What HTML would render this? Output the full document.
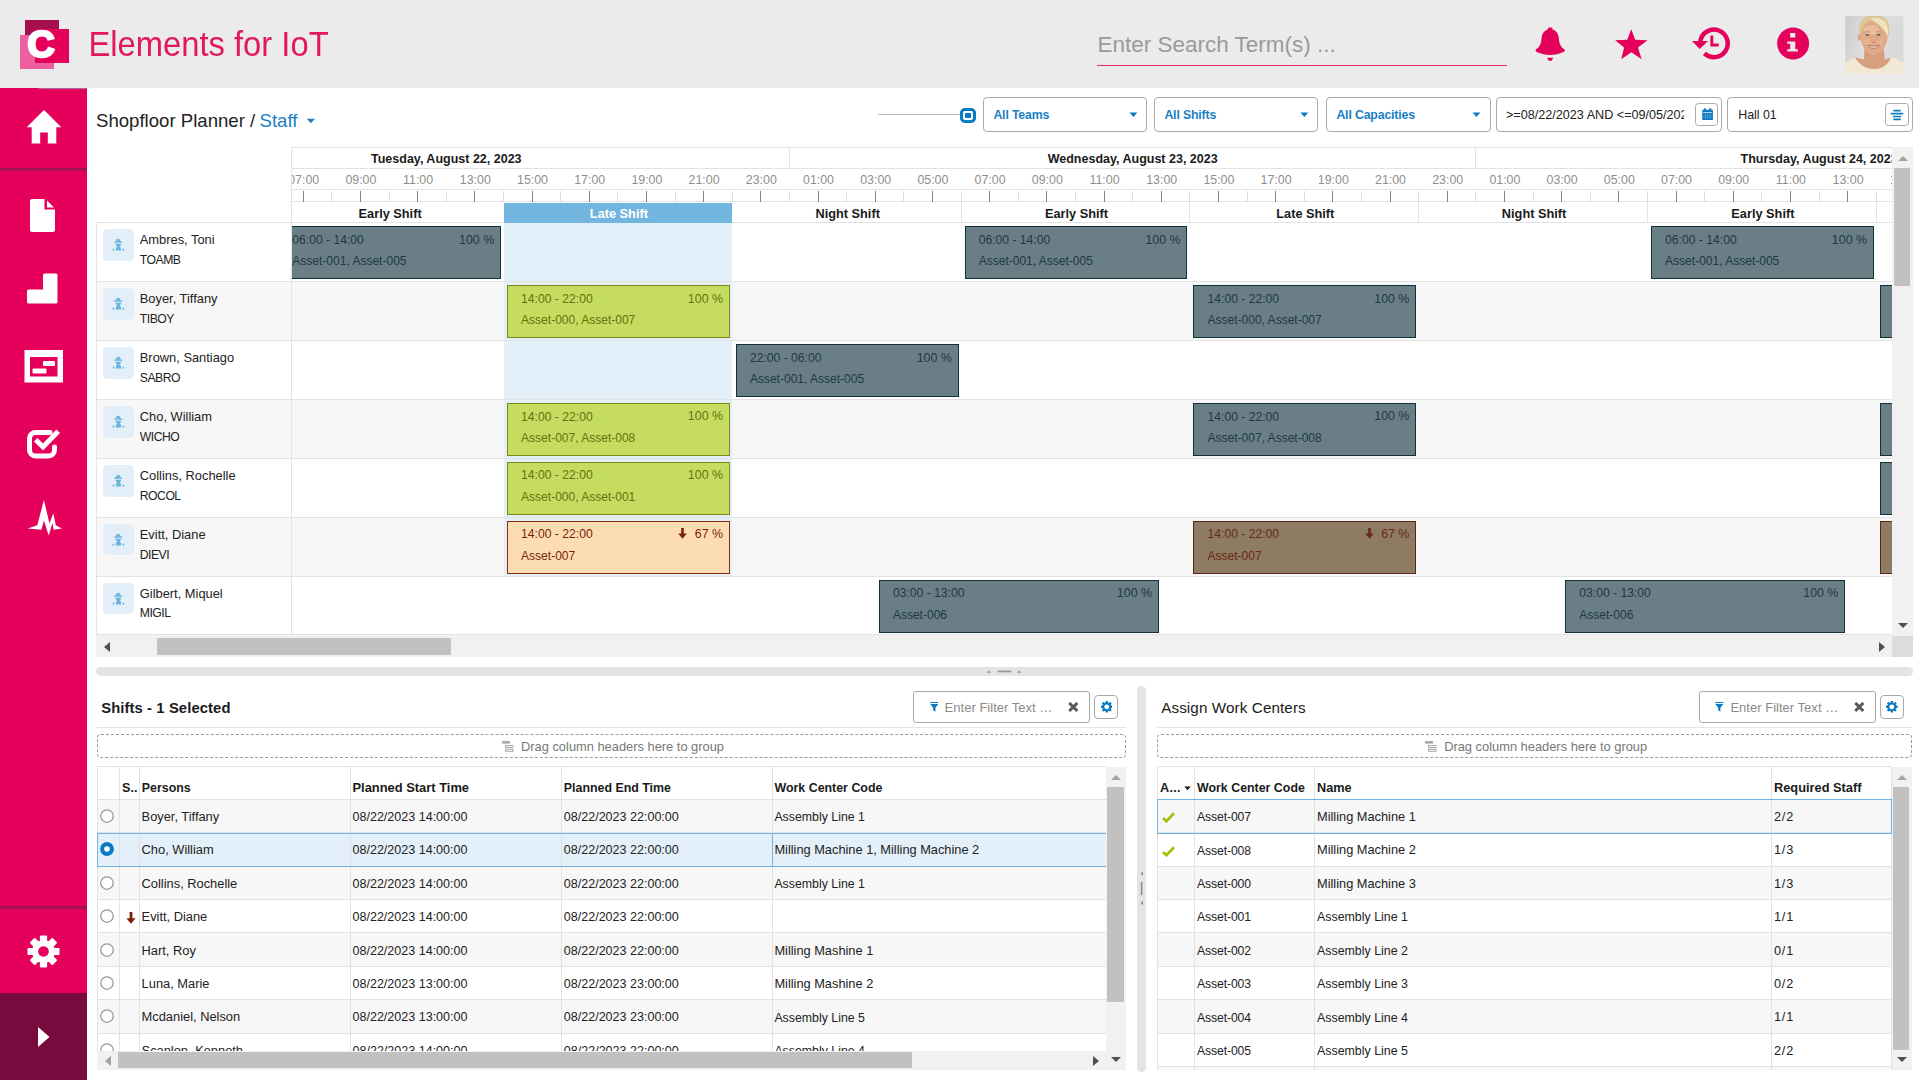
<!DOCTYPE html>
<html lang="en"><head><meta charset="utf-8"><title>Elements for IoT - Shopfloor Planner</title>
<style>
html,body{margin:0;padding:0;background:#fff;}
body{width:1919px;height:1080px;position:relative;overflow:hidden;font-family:"Liberation Sans",sans-serif;font-size:12.7px;color:#222;}
div,svg{position:absolute;box-sizing:border-box;}
.t{white-space:pre;}
.clip{overflow:hidden;}
</style></head><body>

<div style="left:0.00px;top:0.00px;width:1919.00px;height:88.00px;background:#ebebeb;"></div>
<div style="left:25.00px;top:20.00px;width:34.00px;height:34.00px;background:#a60f4e;"></div>
<div style="left:20.00px;top:35.00px;width:34.00px;height:34.00px;background:#ee5fa0;"></div>
<div style="left:35.00px;top:29.00px;width:34.00px;height:34.00px;background:#e5005b;"></div>
<div class="t" style="top:21.51px;font-size:37.5px;line-height:44px;color:#fff;font-weight:bold;left:27.60px;-webkit-text-stroke:2.400px #fff;">C</div>
<div class="t" style="top:24.65px;font-size:32.76px;line-height:40px;color:#e3175e;left:88.40px;transform:scaleY(1.06);transform-origin:0 31.35px;">Elements for IoT</div>
<div class="t" style="top:29.90px;font-size:22.5px;line-height:30px;color:#9a9a9a;left:1097.40px;">Enter Search Term(s) ...</div>
<div style="left:1096.50px;top:64.50px;width:410.50px;height:1.50px;background:#e8286f;"></div>
<svg style="left:1535px;top:26px;width:31px;height:36px" viewBox="0 0 31 36"><path fill="#e5005b" d="M12.900 2.400 a1 1 0 0 1 1 -1 h2.600 a1 1 0 0 1 1 1 v1 C22 4.500 23.600 9 23.800 12 C24.200 17.500 25.500 20.500 29.300 23.300 C30.200 24.100 30 25.300 29 25.800 C24 28 19.500 29 15.200 29 C10.900 29 6.400 28 1.400 25.800 C0.400 25.300 0.200 24.100 1.100 23.300 C4.900 20.500 6.200 17.500 6.600 12 C6.800 9 8.400 4.500 12.900 3.400Z M12.300 31.700 H18.100 C17.600 33.700 16.600 35 15.200 35 C13.800 35 12.800 33.700 12.300 31.700Z"/></svg>
<svg style="left:1614px;top:28px;width:35px;height:33px" viewBox="0 0 35 33"><path fill="#e5005b" d="M17.200 1.200 L21.200 11.800 L33.600 12.200 L24 19.500 L27.600 31.200 L17.400 24.200 L7.200 31.200 L10.100 19.500 L1.100 12.200 L13.200 11.800Z"/></svg>
<svg style="left:1691px;top:26px;width:40px;height:35px" viewBox="0 0 40 35"><g fill="none" stroke="#e5005b"><path stroke-width="4.500" d="M9.300 15.300 A13.800 13.800 0 1 1 13.400 27.400"/><path d="M20.800 9.400 V19 H27.700" stroke-width="2.900"/></g><path fill="#e5005b" d="M1 15.100 H17.100 L8.700 23Z"/></svg>
<svg style="left:1777px;top:27px;width:33px;height:33px" viewBox="0 0 33 33"><circle cx="16.100" cy="16.500" r="16" fill="#e5005b"/><path fill="#ebebeb" d="M13.200 5.900 H18.300 V10.600 H13.200Z M10.300 14.600 H18.300 V22.300 H20.900 V24.500 H10.300 V22.300 H13.200 V16.800 H10.300Z"/></svg>
<svg style="left:1845px;top:15.500px;width:58.800px;height:58.600px" viewBox="0 0 59 59">
<defs><linearGradient id="avbg" x1="0" x2="1" y1="0" y2="0.300"><stop offset="0" stop-color="#cbcbcb"/><stop offset="0.450" stop-color="#dfdfdf"/><stop offset="1" stop-color="#d9d9d9"/></linearGradient>
<filter id="avbl" x="-10%" y="-10%" width="120%" height="120%"><feGaussianBlur stdDeviation="0.550"/></filter>
<clipPath id="avc"><rect width="59" height="59"/></clipPath></defs>
<g clip-path="url(#avc)"><rect width="59" height="59" fill="url(#avbg)"/>
<g filter="url(#avbl)">
<path d="M19.500 33 H39 L40 43.500 L48 41.500 V57 H9 V41.500 L19 43.500Z" fill="#d6a07f"/>
<path d="M-2 48 L10 41.600 C13 47.500 19 53.400 29.500 53.400 C39.500 53.400 44 47.500 46.500 41.400 L61 47.500 V61 H-2Z" fill="#f2e8d6"/>
<ellipse cx="14.300" cy="21.500" rx="1.600" ry="3.200" fill="#d9a182"/>
<path d="M15 19 C14 8 20 3 29 3 C38 3 43.500 9 43 20 C42.500 30 36 39.500 29 39.500 C22 39.500 15.800 30 15 19Z" fill="#e0aa88"/>
<ellipse cx="26.500" cy="14" rx="8" ry="5" fill="#f0c4a4" opacity="0.700"/><ellipse cx="22" cy="26" rx="3.500" ry="3" fill="#ecb898" opacity="0.600"/><ellipse cx="35.500" cy="26" rx="3" ry="3" fill="#ecb898" opacity="0.500"/>
<path d="M14.800 18 C12.500 8 17 0.500 26 -1 C36 -2.500 42.500 1.500 44 9 C45 14 44.800 18.500 43 21 C41 15.500 36 9.500 26 4.500 C21 6 17.500 11 16.200 17.500Z" fill="#dcc693"/>
<path d="M25 2.500 C31 1 38 2 41.500 8 C43.500 12 43.800 17 43 20.500 C40 14 34.500 8 25 2.500Z" fill="#efe2bd"/>
<path d="M23.300 29.800 Q28.700 33.800 34.200 29.800 Q28.700 31.300 23.300 29.800Z" fill="#fff"/>
<path d="M22.800 29.500 Q28.700 31.500 34.700 29.500" stroke="#b06a58" stroke-width="0.900" fill="none"/>
<path d="M23.500 30.500 Q28.700 35.300 34 30.500" stroke="#c08270" stroke-width="0.900" fill="none"/>
<ellipse cx="22.600" cy="18.900" rx="2" ry="0.900" fill="#6b5a55"/><ellipse cx="33.600" cy="18.900" rx="2" ry="0.900" fill="#6b5a55"/>
<path d="M19.800 16.300 Q22.500 15 25.300 16.200 M31 16.200 Q33.800 15 36.500 16.300" stroke="#b08a68" stroke-width="0.800" fill="none"/>
<path d="M27 26 Q28.700 27.200 30.500 26" stroke="#b57f66" stroke-width="1" fill="none"/>
</g></g></svg>
<div style="left:0.00px;top:88.00px;width:87.30px;height:905.00px;background:#e5005b;"></div>
<div style="left:39.00px;top:88.00px;width:48.30px;height:0.80px;background:#b065a5;"></div>
<div style="left:0.00px;top:168.00px;width:87.30px;height:3.00px;background:#a5124f;"></div>
<div style="left:0.00px;top:906.00px;width:87.30px;height:3.00px;background:#a5124f;"></div>
<div style="left:0.00px;top:993.00px;width:87.30px;height:87.00px;background:#780b3d;"></div>
<svg style="left:25px;top:109px;width:38px;height:36px" viewBox="0 0 38 36"><path fill="#fff" d="M19 1 L36.300 18.300 H31.300 V34.500 H22.800 V23.500 H15.200 V34.500 H6.700 V18.300 H1.700Z"/></svg>
<svg style="left:30px;top:198px;width:26px;height:35px" viewBox="0 0 26 35"><path fill="#fff" d="M2 1 H14.500 V11.500 H25 V32 a2 2 0 0 1 -2 2 H2 a2 2 0 0 1 -2 -2 V3 a2 2 0 0 1 2 -2Z M17 2.500 L24 9.500 H17Z"/></svg>
<svg style="left:26px;top:272px;width:32px;height:33px" viewBox="0 0 32 33"><path fill="#fff" d="M18.500 1.500 H30 a1.500 1.500 0 0 1 1.500 1.500 V30 a1.500 1.500 0 0 1 -1.500 1.500 H2.500 a1.500 1.500 0 0 1 -1.500 -1.500 V19 a1.500 1.500 0 0 1 1.500 -1.500 H17 V3 a1.500 1.500 0 0 1 1.500 -1.500Z"/></svg>
<svg style="left:24px;top:349px;width:40px;height:34px" viewBox="0 0 40 34"><path fill="#fff" fill-rule="evenodd" d="M0.500 1 H39 V33.500 H0.500Z M6 8 V27.500 H33.500 V8Z"/><rect x="19" y="12" width="12" height="5" rx="1" fill="#fff"/><rect x="8.500" y="19.500" width="14" height="5" rx="1" fill="#fff"/></svg>
<svg style="left:26px;top:427px;width:36px;height:34px" viewBox="0 0 36 34"><path fill="none" stroke="#fff" stroke-width="5" stroke-linecap="round" stroke-linejoin="round" d="M24 5.500 H9.500 a6 6 0 0 0 -6 6 V23 a6 6 0 0 0 6 6 H22.500 a6 6 0 0 0 6 -6 V20"/><path fill="none" stroke="#fff" stroke-width="5" stroke-linecap="square" stroke-linejoin="miter" d="M11.500 14.500 L17 20 L30.500 6"/></svg>
<svg style="left:27px;top:499px;width:36px;height:38px" viewBox="27 499 36 38"><path fill="#fff" d="M27.600 528.400 L37.300 525.200 L43.900 500 L49.500 523.500 L53.300 513.200 L55.800 525.200 L62 528.400 L53.600 529.700 L52.400 523 L48.700 535.600 L43.900 520.500 L41.400 529.800Z"/></svg>
<svg style="left:27px;top:935px;width:33px;height:33px" viewBox="-16.500 -16.500 33 33"><g fill="#fff"><path fill-rule="evenodd" d="M0 -11.500 a11.500 11.500 0 1 0 0.010 0Z M0 -5.300 a5.300 5.300 0 1 1 -0.010 0Z"/><rect x="-3.600" y="-16" width="7.200" height="7" rx="1" transform="rotate(0)"/><rect x="-3.600" y="-16" width="7.200" height="7" rx="1" transform="rotate(45)"/><rect x="-3.600" y="-16" width="7.200" height="7" rx="1" transform="rotate(90)"/><rect x="-3.600" y="-16" width="7.200" height="7" rx="1" transform="rotate(135)"/><rect x="-3.600" y="-16" width="7.200" height="7" rx="1" transform="rotate(180)"/><rect x="-3.600" y="-16" width="7.200" height="7" rx="1" transform="rotate(225)"/><rect x="-3.600" y="-16" width="7.200" height="7" rx="1" transform="rotate(270)"/><rect x="-3.600" y="-16" width="7.200" height="7" rx="1" transform="rotate(315)"/></g></svg>
<svg style="left:37px;top:1026px;width:14px;height:22px" viewBox="0 0 14 22"><path fill="#fff" d="M1 1 L12.500 11 L1 21Z"/></svg>
<div class="t" style="top:108.06px;font-size:18.6px;line-height:26px;color:#222;left:96.00px;">Shopfloor Planner / </div>
<div class="t" style="top:108.06px;font-size:18.6px;line-height:26px;color:#1a7fc4;left:259.50px;">Staff</div>
<svg style="left:306px;top:118px;width:10px;height:6px" viewBox="0 0 10 6"><path fill="#1a7fc4" d="M0.800 0.800 H9 L4.900 5.200Z"/></svg>
<div style="left:877.60px;top:113.60px;width:83.00px;height:1.50px;background:#b9b9b9;"></div>
<div style="left:960.00px;top:107.70px;width:15.70px;height:15.60px;border:3.100px solid #0a7ac2;border-radius:4.800px;background:#fff;"></div>
<div style="left:964.90px;top:112.60px;width:5.90px;height:5.80px;background:#0a7ac2;border-radius:0.500px;"></div>
<div style="left:982.60px;top:97.30px;width:164.60px;height:34.60px;border:1px solid #a9a9a9;border-radius:4px;background:#fff;"></div>
<div class="t" style="top:104.94px;font-size:12.3px;line-height:20px;color:#1a7fc4;font-weight:bold;letter-spacing:-0.15px;left:993.40px;">All Teams</div>
<svg style="left:1128.5px;top:112.3px;width:9px;height:6px" viewBox="0 0 9 6"><path fill="#0a7ac2" d="M0.500 0.500 H8.300 L4.400 4.900Z"/></svg>
<div style="left:1154.00px;top:97.30px;width:164.40px;height:34.60px;border:1px solid #a9a9a9;border-radius:4px;background:#fff;"></div>
<div class="t" style="top:104.94px;font-size:12.3px;line-height:20px;color:#1a7fc4;font-weight:bold;letter-spacing:-0.15px;left:1164.40px;">All Shifts</div>
<svg style="left:1299.8px;top:112.3px;width:9px;height:6px" viewBox="0 0 9 6"><path fill="#0a7ac2" d="M0.500 0.500 H8.300 L4.400 4.900Z"/></svg>
<div style="left:1326.00px;top:97.30px;width:164.80px;height:34.60px;border:1px solid #a9a9a9;border-radius:4px;background:#fff;"></div>
<div class="t" style="top:104.94px;font-size:12.3px;line-height:20px;color:#1a7fc4;font-weight:bold;letter-spacing:-0.15px;left:1336.40px;">All Capacities</div>
<svg style="left:1471.6px;top:112.3px;width:9px;height:6px" viewBox="0 0 9 6"><path fill="#0a7ac2" d="M0.500 0.500 H8.300 L4.400 4.900Z"/></svg>
<div style="left:1495.60px;top:97.30px;width:226.60px;height:34.60px;border:1px solid #a9a9a9;border-radius:4px;background:#fff;"></div>
<div style="left:1506.00px;top:104.00px;width:177.50px;height:22.00px;overflow:hidden;"><div class="t" style="left:0;top:0;line-height:22px;font-size:12.62px;color:#222;letter-spacing:0px">&gt;=08/22/2023 AND &lt;=09/05/2023</div></div>
<div style="left:1695.20px;top:103.00px;width:23.00px;height:23.00px;border:1px solid #a9a9a9;border-radius:3.500px;background:#fff;"></div>
<svg style="left:1701.600px;top:108.200px;width:11.200px;height:12.400px" viewBox="0 0 14 15"><g fill="#0a7ac2"><rect x="0.300" y="2" width="13.400" height="12.800" rx="1"/><rect x="2.400" y="0.200" width="2.400" height="3.200" rx="0.600"/><rect x="9.200" y="0.200" width="2.400" height="3.200" rx="0.600"/></g><g fill="#fff"><rect x="1.400" y="5" width="11.200" height="0.900" opacity="0.900"/><rect x="4.20" y="5.500" width="0.450" height="8.300" opacity="0.450"/><rect x="7.00" y="5.500" width="0.450" height="8.300" opacity="0.450"/><rect x="9.80" y="5.500" width="0.450" height="8.300" opacity="0.450"/><rect x="1.400" y="8.50" width="11.200" height="0.450" opacity="0.450"/><rect x="1.400" y="11.10" width="11.200" height="0.450" opacity="0.450"/></g></svg>
<div style="left:1727.30px;top:97.30px;width:186.00px;height:34.60px;border:1px solid #a9a9a9;border-radius:4px;background:#fff;"></div>
<div class="t" style="top:105.30px;font-size:12.4px;line-height:20px;color:#222;left:1738.20px;">Hall 01</div>
<div style="left:1885.30px;top:103.00px;width:23.30px;height:23.00px;border:1px solid #a9a9a9;border-radius:3.500px;background:#fff;"></div>
<svg style="left:1890px;top:109px;width:14px;height:12px" viewBox="0 0 14 12"><g fill="#0a7ac2"><rect x="3.250" y="0.750" width="7.500" height="1.700" rx="0.400"/><rect x="0.850" y="3.850" width="12.300" height="1.700" rx="0.400"/><rect x="2.750" y="6.650" width="8.500" height="1.700" rx="0.400"/><rect x="3.250" y="9.450" width="7.500" height="1.700" rx="0.400"/></g></svg>
<div style="left:96.50px;top:281.42px;width:1795.50px;height:58.92px;background:#f7f7f7;"></div>
<div style="left:96.50px;top:399.26px;width:1795.50px;height:58.92px;background:#f7f7f7;"></div>
<div style="left:96.50px;top:517.10px;width:1795.50px;height:58.92px;background:#f7f7f7;"></div>
<div style="left:504.00px;top:223.00px;width:228.30px;height:58.42px;background:#e4f0f9;"></div>
<div style="left:504.00px;top:281.92px;width:228.30px;height:58.42px;background:#e4f0f9;"></div>
<div style="left:504.00px;top:340.84px;width:228.30px;height:58.42px;background:#e4f0f9;"></div>
<div style="left:504.00px;top:399.76px;width:228.30px;height:58.42px;background:#e4f0f9;"></div>
<div style="left:504.00px;top:458.68px;width:228.30px;height:58.42px;background:#e4f0f9;"></div>
<div style="left:504.00px;top:517.60px;width:228.30px;height:58.42px;background:#e4f0f9;"></div>
<div style="left:503.50px;top:634.00px;width:228.80px;height:1.00px;background:#e4f0f9;"></div>
<div style="left:96.50px;top:222.00px;width:1795.50px;height:1.00px;background:#e3e3e3;"></div>
<div style="left:96.50px;top:280.92px;width:1795.50px;height:1.00px;background:#e3e3e3;"></div>
<div style="left:96.50px;top:339.84px;width:1795.50px;height:1.00px;background:#e3e3e3;"></div>
<div style="left:96.50px;top:398.76px;width:1795.50px;height:1.00px;background:#e3e3e3;"></div>
<div style="left:96.50px;top:457.68px;width:1795.50px;height:1.00px;background:#e3e3e3;"></div>
<div style="left:96.50px;top:516.60px;width:1795.50px;height:1.00px;background:#e3e3e3;"></div>
<div style="left:96.50px;top:575.52px;width:1795.50px;height:1.00px;background:#e3e3e3;"></div>
<div style="left:96.50px;top:634.44px;width:1795.50px;height:1.00px;background:#e3e3e3;"></div>
<div style="left:96.00px;top:222.00px;width:1.00px;height:413.00px;background:#e3e3e3;"></div>
<div style="left:291.00px;top:147.00px;width:1.00px;height:488.00px;background:#e3e3e3;"></div>
<div style="left:291.00px;top:147.00px;width:1601.00px;height:1.00px;background:#e3e3e3;"></div>
<div style="left:291.00px;top:167.80px;width:1601.00px;height:1.00px;background:#e3e3e3;"></div>
<div style="left:291.00px;top:189.30px;width:1601.00px;height:1.00px;background:#e3e3e3;"></div>
<div style="left:291.00px;top:201.20px;width:1601.00px;height:1.00px;background:#e3e3e3;"></div>
<div style="left:103.00px;top:229.30px;width:31.20px;height:31.60px;background:#e2eff9;border-radius:4.500px;"></div>
<svg style="left:112px;top:238.3px;width:14px;height:14px" viewBox="0 0 14 14"><g fill="#6ab4de"><path d="M3.500 3.700 L4.700 1.500 Q6.200 0.200 7.700 1.500 L9 3.700Z"/><rect x="2.100" y="3.600" width="8.300" height="1.250" rx="0.300"/><path d="M3.300 5.700 H9.300 L8.600 7.500 L7.600 8.200 L9 10 V12.500 H3.900 V10 L5.300 8.200 L4.100 7.500Z"/><rect x="0.600" y="10.800" width="1.700" height="1.700" rx="0.300"/><rect x="10.400" y="10.800" width="1.800" height="1.700" rx="0.300"/></g></svg>
<div class="t" style="top:230.34px;font-size:12.87px;line-height:20px;color:#222;left:139.80px;">Ambres, Toni</div>
<div class="t" style="top:249.97px;font-size:12.2px;line-height:20px;color:#222;letter-spacing:-0.5px;left:139.80px;">TOAMB</div>
<div style="left:103.00px;top:288.22px;width:31.20px;height:31.60px;background:#e2eff9;border-radius:4.500px;"></div>
<svg style="left:112px;top:297.22px;width:14px;height:14px" viewBox="0 0 14 14"><g fill="#6ab4de"><path d="M3.500 3.700 L4.700 1.500 Q6.200 0.200 7.700 1.500 L9 3.700Z"/><rect x="2.100" y="3.600" width="8.300" height="1.250" rx="0.300"/><path d="M3.300 5.700 H9.300 L8.600 7.500 L7.600 8.200 L9 10 V12.500 H3.900 V10 L5.300 8.200 L4.100 7.500Z"/><rect x="0.600" y="10.800" width="1.700" height="1.700" rx="0.300"/><rect x="10.400" y="10.800" width="1.800" height="1.700" rx="0.300"/></g></svg>
<div class="t" style="top:289.26px;font-size:12.87px;line-height:20px;color:#222;left:139.80px;">Boyer, Tiffany</div>
<div class="t" style="top:308.89px;font-size:12.2px;line-height:20px;color:#222;letter-spacing:-0.5px;left:139.80px;">TIBOY</div>
<div style="left:103.00px;top:347.14px;width:31.20px;height:31.60px;background:#e2eff9;border-radius:4.500px;"></div>
<svg style="left:112px;top:356.14000000000004px;width:14px;height:14px" viewBox="0 0 14 14"><g fill="#6ab4de"><path d="M3.500 3.700 L4.700 1.500 Q6.200 0.200 7.700 1.500 L9 3.700Z"/><rect x="2.100" y="3.600" width="8.300" height="1.250" rx="0.300"/><path d="M3.300 5.700 H9.300 L8.600 7.500 L7.600 8.200 L9 10 V12.500 H3.900 V10 L5.300 8.200 L4.100 7.500Z"/><rect x="0.600" y="10.800" width="1.700" height="1.700" rx="0.300"/><rect x="10.400" y="10.800" width="1.800" height="1.700" rx="0.300"/></g></svg>
<div class="t" style="top:348.18px;font-size:12.87px;line-height:20px;color:#222;left:139.80px;">Brown, Santiago</div>
<div class="t" style="top:367.81px;font-size:12.2px;line-height:20px;color:#222;letter-spacing:-0.5px;left:139.80px;">SABRO</div>
<div style="left:103.00px;top:406.06px;width:31.20px;height:31.60px;background:#e2eff9;border-radius:4.500px;"></div>
<svg style="left:112px;top:415.06px;width:14px;height:14px" viewBox="0 0 14 14"><g fill="#6ab4de"><path d="M3.500 3.700 L4.700 1.500 Q6.200 0.200 7.700 1.500 L9 3.700Z"/><rect x="2.100" y="3.600" width="8.300" height="1.250" rx="0.300"/><path d="M3.300 5.700 H9.300 L8.600 7.500 L7.600 8.200 L9 10 V12.500 H3.900 V10 L5.300 8.200 L4.100 7.500Z"/><rect x="0.600" y="10.800" width="1.700" height="1.700" rx="0.300"/><rect x="10.400" y="10.800" width="1.800" height="1.700" rx="0.300"/></g></svg>
<div class="t" style="top:407.10px;font-size:12.87px;line-height:20px;color:#222;left:139.80px;">Cho, William</div>
<div class="t" style="top:426.73px;font-size:12.2px;line-height:20px;color:#222;letter-spacing:-0.5px;left:139.80px;">WICHO</div>
<div style="left:103.00px;top:464.98px;width:31.20px;height:31.60px;background:#e2eff9;border-radius:4.500px;"></div>
<svg style="left:112px;top:473.98px;width:14px;height:14px" viewBox="0 0 14 14"><g fill="#6ab4de"><path d="M3.500 3.700 L4.700 1.500 Q6.200 0.200 7.700 1.500 L9 3.700Z"/><rect x="2.100" y="3.600" width="8.300" height="1.250" rx="0.300"/><path d="M3.300 5.700 H9.300 L8.600 7.500 L7.600 8.200 L9 10 V12.500 H3.900 V10 L5.300 8.200 L4.100 7.500Z"/><rect x="0.600" y="10.800" width="1.700" height="1.700" rx="0.300"/><rect x="10.400" y="10.800" width="1.800" height="1.700" rx="0.300"/></g></svg>
<div class="t" style="top:466.02px;font-size:12.87px;line-height:20px;color:#222;left:139.80px;">Collins, Rochelle</div>
<div class="t" style="top:485.65px;font-size:12.2px;line-height:20px;color:#222;letter-spacing:-0.5px;left:139.80px;">ROCOL</div>
<div style="left:103.00px;top:523.90px;width:31.20px;height:31.60px;background:#e2eff9;border-radius:4.500px;"></div>
<svg style="left:112px;top:532.9px;width:14px;height:14px" viewBox="0 0 14 14"><g fill="#6ab4de"><path d="M3.500 3.700 L4.700 1.500 Q6.200 0.200 7.700 1.500 L9 3.700Z"/><rect x="2.100" y="3.600" width="8.300" height="1.250" rx="0.300"/><path d="M3.300 5.700 H9.300 L8.600 7.500 L7.600 8.200 L9 10 V12.500 H3.900 V10 L5.300 8.200 L4.100 7.500Z"/><rect x="0.600" y="10.800" width="1.700" height="1.700" rx="0.300"/><rect x="10.400" y="10.800" width="1.800" height="1.700" rx="0.300"/></g></svg>
<div class="t" style="top:524.94px;font-size:12.87px;line-height:20px;color:#222;left:139.80px;">Evitt, Diane</div>
<div class="t" style="top:544.57px;font-size:12.2px;line-height:20px;color:#222;letter-spacing:-0.5px;left:139.80px;">DIEVI</div>
<div style="left:103.00px;top:582.82px;width:31.20px;height:31.60px;background:#e2eff9;border-radius:4.500px;"></div>
<svg style="left:112px;top:591.8199999999999px;width:14px;height:14px" viewBox="0 0 14 14"><g fill="#6ab4de"><path d="M3.500 3.700 L4.700 1.500 Q6.200 0.200 7.700 1.500 L9 3.700Z"/><rect x="2.100" y="3.600" width="8.300" height="1.250" rx="0.300"/><path d="M3.300 5.700 H9.300 L8.600 7.500 L7.600 8.200 L9 10 V12.500 H3.900 V10 L5.300 8.200 L4.100 7.500Z"/><rect x="0.600" y="10.800" width="1.700" height="1.700" rx="0.300"/><rect x="10.400" y="10.800" width="1.800" height="1.700" rx="0.300"/></g></svg>
<div class="t" style="top:583.86px;font-size:12.87px;line-height:20px;color:#222;left:139.80px;">Gilbert, Miquel</div>
<div class="t" style="top:603.49px;font-size:12.2px;line-height:20px;color:#222;letter-spacing:-0.5px;left:139.80px;">MIGIL</div>
<div class="clip" style="left:292.0px;top:147px;width:1600.0px;height:488px;">
<div class="t" style="top:1.67px;font-size:12.5px;line-height:20px;color:#1a1a1a;font-weight:bold;left:4.30px;width:300px;text-align:center;">Tuesday, August 22, 2023</div>
<div style="left:497.00px;top:1.00px;width:1.00px;height:20.00px;background:#e3e3e3;"></div>
<div class="t" style="top:1.67px;font-size:12.5px;line-height:20px;color:#1a1a1a;font-weight:bold;left:690.70px;width:300px;text-align:center;">Wednesday, August 23, 2023</div>
<div style="left:1183.40px;top:1.00px;width:1.00px;height:20.00px;background:#e3e3e3;"></div>
<div class="t" style="top:1.67px;font-size:12.5px;line-height:20px;color:#1a1a1a;font-weight:bold;left:1377.10px;width:300px;text-align:center;">Thursday, August 24, 2023</div>
<div style="left:-17.80px;top:43.50px;width:1.00px;height:11.00px;background:#dedede;"></div>
<div class="t" style="top:22.70px;font-size:12.4px;line-height:20px;color:#8e8e8e;left:-18.30px;width:60px;text-align:center;">07:00</div>
<div style="left:10.80px;top:43.50px;width:1.00px;height:11.00px;background:#858585;"></div>
<div style="left:39.40px;top:43.50px;width:1.00px;height:11.00px;background:#dedede;"></div>
<div class="t" style="top:22.70px;font-size:12.4px;line-height:20px;color:#8e8e8e;left:38.90px;width:60px;text-align:center;">09:00</div>
<div style="left:68.00px;top:43.50px;width:1.00px;height:11.00px;background:#858585;"></div>
<div style="left:96.60px;top:43.50px;width:1.00px;height:11.00px;background:#dedede;"></div>
<div class="t" style="top:22.70px;font-size:12.4px;line-height:20px;color:#8e8e8e;left:96.10px;width:60px;text-align:center;">11:00</div>
<div style="left:125.20px;top:43.50px;width:1.00px;height:11.00px;background:#858585;"></div>
<div style="left:153.80px;top:43.50px;width:1.00px;height:11.00px;background:#dedede;"></div>
<div class="t" style="top:22.70px;font-size:12.4px;line-height:20px;color:#8e8e8e;left:153.30px;width:60px;text-align:center;">13:00</div>
<div style="left:182.40px;top:43.50px;width:1.00px;height:11.00px;background:#858585;"></div>
<div style="left:211.00px;top:43.50px;width:1.00px;height:11.00px;background:#dedede;"></div>
<div class="t" style="top:22.70px;font-size:12.4px;line-height:20px;color:#8e8e8e;left:210.50px;width:60px;text-align:center;">15:00</div>
<div style="left:239.60px;top:43.50px;width:1.00px;height:11.00px;background:#858585;"></div>
<div style="left:268.20px;top:43.50px;width:1.00px;height:11.00px;background:#dedede;"></div>
<div class="t" style="top:22.70px;font-size:12.4px;line-height:20px;color:#8e8e8e;left:267.70px;width:60px;text-align:center;">17:00</div>
<div style="left:296.80px;top:43.50px;width:1.00px;height:11.00px;background:#858585;"></div>
<div style="left:325.40px;top:43.50px;width:1.00px;height:11.00px;background:#dedede;"></div>
<div class="t" style="top:22.70px;font-size:12.4px;line-height:20px;color:#8e8e8e;left:324.90px;width:60px;text-align:center;">19:00</div>
<div style="left:354.00px;top:43.50px;width:1.00px;height:11.00px;background:#858585;"></div>
<div style="left:382.60px;top:43.50px;width:1.00px;height:11.00px;background:#dedede;"></div>
<div class="t" style="top:22.70px;font-size:12.4px;line-height:20px;color:#8e8e8e;left:382.10px;width:60px;text-align:center;">21:00</div>
<div style="left:411.20px;top:43.50px;width:1.00px;height:11.00px;background:#858585;"></div>
<div style="left:439.80px;top:43.50px;width:1.00px;height:11.00px;background:#dedede;"></div>
<div class="t" style="top:22.70px;font-size:12.4px;line-height:20px;color:#8e8e8e;left:439.30px;width:60px;text-align:center;">23:00</div>
<div style="left:468.40px;top:43.50px;width:1.00px;height:11.00px;background:#858585;"></div>
<div style="left:497.00px;top:43.50px;width:1.00px;height:11.00px;background:#dedede;"></div>
<div class="t" style="top:22.70px;font-size:12.4px;line-height:20px;color:#8e8e8e;left:496.50px;width:60px;text-align:center;">01:00</div>
<div style="left:525.60px;top:43.50px;width:1.00px;height:11.00px;background:#858585;"></div>
<div style="left:554.20px;top:43.50px;width:1.00px;height:11.00px;background:#dedede;"></div>
<div class="t" style="top:22.70px;font-size:12.4px;line-height:20px;color:#8e8e8e;left:553.70px;width:60px;text-align:center;">03:00</div>
<div style="left:582.80px;top:43.50px;width:1.00px;height:11.00px;background:#858585;"></div>
<div style="left:611.40px;top:43.50px;width:1.00px;height:11.00px;background:#dedede;"></div>
<div class="t" style="top:22.70px;font-size:12.4px;line-height:20px;color:#8e8e8e;left:610.90px;width:60px;text-align:center;">05:00</div>
<div style="left:640.00px;top:43.50px;width:1.00px;height:11.00px;background:#858585;"></div>
<div style="left:668.60px;top:43.50px;width:1.00px;height:11.00px;background:#dedede;"></div>
<div class="t" style="top:22.70px;font-size:12.4px;line-height:20px;color:#8e8e8e;left:668.10px;width:60px;text-align:center;">07:00</div>
<div style="left:697.20px;top:43.50px;width:1.00px;height:11.00px;background:#858585;"></div>
<div style="left:725.80px;top:43.50px;width:1.00px;height:11.00px;background:#dedede;"></div>
<div class="t" style="top:22.70px;font-size:12.4px;line-height:20px;color:#8e8e8e;left:725.30px;width:60px;text-align:center;">09:00</div>
<div style="left:754.40px;top:43.50px;width:1.00px;height:11.00px;background:#858585;"></div>
<div style="left:783.00px;top:43.50px;width:1.00px;height:11.00px;background:#dedede;"></div>
<div class="t" style="top:22.70px;font-size:12.4px;line-height:20px;color:#8e8e8e;left:782.50px;width:60px;text-align:center;">11:00</div>
<div style="left:811.60px;top:43.50px;width:1.00px;height:11.00px;background:#858585;"></div>
<div style="left:840.20px;top:43.50px;width:1.00px;height:11.00px;background:#dedede;"></div>
<div class="t" style="top:22.70px;font-size:12.4px;line-height:20px;color:#8e8e8e;left:839.70px;width:60px;text-align:center;">13:00</div>
<div style="left:868.80px;top:43.50px;width:1.00px;height:11.00px;background:#858585;"></div>
<div style="left:897.40px;top:43.50px;width:1.00px;height:11.00px;background:#dedede;"></div>
<div class="t" style="top:22.70px;font-size:12.4px;line-height:20px;color:#8e8e8e;left:896.90px;width:60px;text-align:center;">15:00</div>
<div style="left:926.00px;top:43.50px;width:1.00px;height:11.00px;background:#858585;"></div>
<div style="left:954.60px;top:43.50px;width:1.00px;height:11.00px;background:#dedede;"></div>
<div class="t" style="top:22.70px;font-size:12.4px;line-height:20px;color:#8e8e8e;left:954.10px;width:60px;text-align:center;">17:00</div>
<div style="left:983.20px;top:43.50px;width:1.00px;height:11.00px;background:#858585;"></div>
<div style="left:1011.80px;top:43.50px;width:1.00px;height:11.00px;background:#dedede;"></div>
<div class="t" style="top:22.70px;font-size:12.4px;line-height:20px;color:#8e8e8e;left:1011.30px;width:60px;text-align:center;">19:00</div>
<div style="left:1040.40px;top:43.50px;width:1.00px;height:11.00px;background:#858585;"></div>
<div style="left:1069.00px;top:43.50px;width:1.00px;height:11.00px;background:#dedede;"></div>
<div class="t" style="top:22.70px;font-size:12.4px;line-height:20px;color:#8e8e8e;left:1068.50px;width:60px;text-align:center;">21:00</div>
<div style="left:1097.60px;top:43.50px;width:1.00px;height:11.00px;background:#858585;"></div>
<div style="left:1126.20px;top:43.50px;width:1.00px;height:11.00px;background:#dedede;"></div>
<div class="t" style="top:22.70px;font-size:12.4px;line-height:20px;color:#8e8e8e;left:1125.70px;width:60px;text-align:center;">23:00</div>
<div style="left:1154.80px;top:43.50px;width:1.00px;height:11.00px;background:#858585;"></div>
<div style="left:1183.40px;top:43.50px;width:1.00px;height:11.00px;background:#dedede;"></div>
<div class="t" style="top:22.70px;font-size:12.4px;line-height:20px;color:#8e8e8e;left:1182.90px;width:60px;text-align:center;">01:00</div>
<div style="left:1212.00px;top:43.50px;width:1.00px;height:11.00px;background:#858585;"></div>
<div style="left:1240.60px;top:43.50px;width:1.00px;height:11.00px;background:#dedede;"></div>
<div class="t" style="top:22.70px;font-size:12.4px;line-height:20px;color:#8e8e8e;left:1240.10px;width:60px;text-align:center;">03:00</div>
<div style="left:1269.20px;top:43.50px;width:1.00px;height:11.00px;background:#858585;"></div>
<div style="left:1297.80px;top:43.50px;width:1.00px;height:11.00px;background:#dedede;"></div>
<div class="t" style="top:22.70px;font-size:12.4px;line-height:20px;color:#8e8e8e;left:1297.30px;width:60px;text-align:center;">05:00</div>
<div style="left:1326.40px;top:43.50px;width:1.00px;height:11.00px;background:#858585;"></div>
<div style="left:1355.00px;top:43.50px;width:1.00px;height:11.00px;background:#dedede;"></div>
<div class="t" style="top:22.70px;font-size:12.4px;line-height:20px;color:#8e8e8e;left:1354.50px;width:60px;text-align:center;">07:00</div>
<div style="left:1383.60px;top:43.50px;width:1.00px;height:11.00px;background:#858585;"></div>
<div style="left:1412.20px;top:43.50px;width:1.00px;height:11.00px;background:#dedede;"></div>
<div class="t" style="top:22.70px;font-size:12.4px;line-height:20px;color:#8e8e8e;left:1411.70px;width:60px;text-align:center;">09:00</div>
<div style="left:1440.80px;top:43.50px;width:1.00px;height:11.00px;background:#858585;"></div>
<div style="left:1469.40px;top:43.50px;width:1.00px;height:11.00px;background:#dedede;"></div>
<div class="t" style="top:22.70px;font-size:12.4px;line-height:20px;color:#8e8e8e;left:1468.90px;width:60px;text-align:center;">11:00</div>
<div style="left:1498.00px;top:43.50px;width:1.00px;height:11.00px;background:#858585;"></div>
<div style="left:1526.60px;top:43.50px;width:1.00px;height:11.00px;background:#dedede;"></div>
<div class="t" style="top:22.70px;font-size:12.4px;line-height:20px;color:#8e8e8e;left:1526.10px;width:60px;text-align:center;">13:00</div>
<div style="left:1555.20px;top:43.50px;width:1.00px;height:11.00px;background:#858585;"></div>
<div style="left:1583.80px;top:43.50px;width:1.00px;height:11.00px;background:#dedede;"></div>
<div class="t" style="top:22.70px;font-size:12.4px;line-height:20px;color:#8e8e8e;left:1583.30px;width:60px;text-align:center;">15:00</div>
<div style="left:1612.40px;top:43.50px;width:1.00px;height:11.00px;background:#858585;"></div>
<div style="left:1641.00px;top:43.50px;width:1.00px;height:11.00px;background:#dedede;"></div>
<div class="t" style="top:22.70px;font-size:12.4px;line-height:20px;color:#8e8e8e;left:1640.50px;width:60px;text-align:center;">17:00</div>
<div style="left:1669.60px;top:43.50px;width:1.00px;height:11.00px;background:#858585;"></div>
<div class="t" style="top:56.78px;font-size:12.75px;line-height:20px;color:#1a1a1a;font-weight:bold;left:-1.90px;width:200px;text-align:center;">Early Shift</div>
<div style="left:-17.80px;top:55.20px;width:1.00px;height:20.00px;background:#e3e3e3;"></div>
<div style="left:211.90px;top:55.60px;width:228.00px;height:20.20px;background:#72b5de;"></div>
<div class="t" style="top:56.78px;font-size:12.75px;line-height:20px;color:#fff;font-weight:bold;left:226.90px;width:200px;text-align:center;">Late Shift</div>
<div class="t" style="top:56.78px;font-size:12.75px;line-height:20px;color:#1a1a1a;font-weight:bold;left:455.70px;width:200px;text-align:center;">Night Shift</div>
<div class="t" style="top:56.78px;font-size:12.75px;line-height:20px;color:#1a1a1a;font-weight:bold;left:684.50px;width:200px;text-align:center;">Early Shift</div>
<div style="left:668.60px;top:55.20px;width:1.00px;height:20.00px;background:#e3e3e3;"></div>
<div class="t" style="top:56.78px;font-size:12.75px;line-height:20px;color:#1a1a1a;font-weight:bold;left:913.30px;width:200px;text-align:center;">Late Shift</div>
<div style="left:897.40px;top:55.20px;width:1.00px;height:20.00px;background:#e3e3e3;"></div>
<div class="t" style="top:56.78px;font-size:12.75px;line-height:20px;color:#1a1a1a;font-weight:bold;left:1142.10px;width:200px;text-align:center;">Night Shift</div>
<div style="left:1126.20px;top:55.20px;width:1.00px;height:20.00px;background:#e3e3e3;"></div>
<div class="t" style="top:56.78px;font-size:12.75px;line-height:20px;color:#1a1a1a;font-weight:bold;left:1370.90px;width:200px;text-align:center;">Early Shift</div>
<div style="left:1355.00px;top:55.20px;width:1.00px;height:20.00px;background:#e3e3e3;"></div>
<div class="t" style="top:56.78px;font-size:12.75px;line-height:20px;color:#1a1a1a;font-weight:bold;left:1599.70px;width:200px;text-align:center;">Late Shift</div>
<div style="left:1583.80px;top:55.20px;width:1.00px;height:20.00px;background:#e3e3e3;"></div>
<div style="left:-13.80px;top:79.40px;width:222.80px;height:52.60px;background:#6a7f85;border:1px solid #10303a;"></div>
<div class="t" style="top:82.79px;font-size:12.15px;line-height:20px;color:#1c3943;left:0.30px;">06:00 - 14:00</div>
<div class="t" style="top:104.24px;font-size:12.02px;line-height:20px;color:#1c3943;left:0.30px;">Asset-001, Asset-005</div>
<div class="t" style="top:82.70px;font-size:12.4px;line-height:20px;color:#1c3943;left:102.20px;width:100px;text-align:right;">100 %</div>
<div style="left:672.60px;top:79.40px;width:222.80px;height:52.60px;background:#6a7f85;border:1px solid #10303a;"></div>
<div class="t" style="top:82.79px;font-size:12.15px;line-height:20px;color:#1c3943;left:686.70px;">06:00 - 14:00</div>
<div class="t" style="top:104.24px;font-size:12.02px;line-height:20px;color:#1c3943;left:686.70px;">Asset-001, Asset-005</div>
<div class="t" style="top:82.70px;font-size:12.4px;line-height:20px;color:#1c3943;left:788.60px;width:100px;text-align:right;">100 %</div>
<div style="left:1359.00px;top:79.40px;width:222.80px;height:52.60px;background:#6a7f85;border:1px solid #10303a;"></div>
<div class="t" style="top:82.79px;font-size:12.15px;line-height:20px;color:#1c3943;left:1373.10px;">06:00 - 14:00</div>
<div class="t" style="top:104.24px;font-size:12.02px;line-height:20px;color:#1c3943;left:1373.10px;">Asset-001, Asset-005</div>
<div class="t" style="top:82.70px;font-size:12.4px;line-height:20px;color:#1c3943;left:1475.00px;width:100px;text-align:right;">100 %</div>
<div style="left:215.00px;top:138.32px;width:222.80px;height:52.60px;background:#c5dc61;border:1px solid #7c8a14;"></div>
<div class="t" style="top:141.71px;font-size:12.15px;line-height:20px;color:#66720c;left:229.10px;">14:00 - 22:00</div>
<div class="t" style="top:163.16px;font-size:12.02px;line-height:20px;color:#66720c;left:229.10px;">Asset-000, Asset-007</div>
<div class="t" style="top:141.62px;font-size:12.4px;line-height:20px;color:#66720c;left:331.00px;width:100px;text-align:right;">100 %</div>
<div style="left:901.40px;top:138.32px;width:222.80px;height:52.60px;background:#6a7f85;border:1px solid #10303a;"></div>
<div class="t" style="top:141.71px;font-size:12.15px;line-height:20px;color:#1c3943;left:915.50px;">14:00 - 22:00</div>
<div class="t" style="top:163.16px;font-size:12.02px;line-height:20px;color:#1c3943;left:915.50px;">Asset-000, Asset-007</div>
<div class="t" style="top:141.62px;font-size:12.4px;line-height:20px;color:#1c3943;left:1017.40px;width:100px;text-align:right;">100 %</div>
<div style="left:1587.80px;top:138.32px;width:222.80px;height:52.60px;background:#6a7f85;border:1px solid #10303a;"></div>
<div class="t" style="top:141.71px;font-size:12.15px;line-height:20px;color:#1c3943;left:1601.90px;">14:00 - 22:00</div>
<div class="t" style="top:163.16px;font-size:12.02px;line-height:20px;color:#1c3943;left:1601.90px;">Asset-000, Asset-007</div>
<div class="t" style="top:141.62px;font-size:12.4px;line-height:20px;color:#1c3943;left:1703.80px;width:100px;text-align:right;">100 %</div>
<div style="left:443.80px;top:197.24px;width:222.80px;height:52.60px;background:#6a7f85;border:1px solid #10303a;"></div>
<div class="t" style="top:200.63px;font-size:12.15px;line-height:20px;color:#1c3943;left:457.90px;">22:00 - 06:00</div>
<div class="t" style="top:222.08px;font-size:12.02px;line-height:20px;color:#1c3943;left:457.90px;">Asset-001, Asset-005</div>
<div class="t" style="top:200.54px;font-size:12.4px;line-height:20px;color:#1c3943;left:559.80px;width:100px;text-align:right;">100 %</div>
<div style="left:215.00px;top:256.16px;width:222.80px;height:52.60px;background:#c5dc61;border:1px solid #7c8a14;"></div>
<div class="t" style="top:259.55px;font-size:12.15px;line-height:20px;color:#66720c;left:229.10px;">14:00 - 22:00</div>
<div class="t" style="top:281.00px;font-size:12.02px;line-height:20px;color:#66720c;left:229.10px;">Asset-007, Asset-008</div>
<div class="t" style="top:259.46px;font-size:12.4px;line-height:20px;color:#66720c;left:331.00px;width:100px;text-align:right;">100 %</div>
<div style="left:901.40px;top:256.16px;width:222.80px;height:52.60px;background:#6a7f85;border:1px solid #10303a;"></div>
<div class="t" style="top:259.55px;font-size:12.15px;line-height:20px;color:#1c3943;left:915.50px;">14:00 - 22:00</div>
<div class="t" style="top:281.00px;font-size:12.02px;line-height:20px;color:#1c3943;left:915.50px;">Asset-007, Asset-008</div>
<div class="t" style="top:259.46px;font-size:12.4px;line-height:20px;color:#1c3943;left:1017.40px;width:100px;text-align:right;">100 %</div>
<div style="left:1587.80px;top:256.16px;width:222.80px;height:52.60px;background:#6a7f85;border:1px solid #10303a;"></div>
<div class="t" style="top:259.55px;font-size:12.15px;line-height:20px;color:#1c3943;left:1601.90px;">14:00 - 22:00</div>
<div class="t" style="top:281.00px;font-size:12.02px;line-height:20px;color:#1c3943;left:1601.90px;">Asset-007, Asset-008</div>
<div class="t" style="top:259.46px;font-size:12.4px;line-height:20px;color:#1c3943;left:1703.80px;width:100px;text-align:right;">100 %</div>
<div style="left:215.00px;top:315.08px;width:222.80px;height:52.60px;background:#c5dc61;border:1px solid #7c8a14;"></div>
<div class="t" style="top:318.47px;font-size:12.15px;line-height:20px;color:#66720c;left:229.10px;">14:00 - 22:00</div>
<div class="t" style="top:339.92px;font-size:12.02px;line-height:20px;color:#66720c;left:229.10px;">Asset-000, Asset-001</div>
<div class="t" style="top:318.38px;font-size:12.4px;line-height:20px;color:#66720c;left:331.00px;width:100px;text-align:right;">100 %</div>
<div style="left:1587.80px;top:315.08px;width:222.80px;height:52.60px;background:#6a7f85;border:1px solid #10303a;"></div>
<div class="t" style="top:318.47px;font-size:12.15px;line-height:20px;color:#1c3943;left:1601.90px;">14:00 - 22:00</div>
<div class="t" style="top:339.92px;font-size:12.02px;line-height:20px;color:#1c3943;left:1601.90px;">Asset-000, Asset-001</div>
<div class="t" style="top:318.38px;font-size:12.4px;line-height:20px;color:#1c3943;left:1703.80px;width:100px;text-align:right;">100 %</div>
<div style="left:215.00px;top:374.00px;width:222.80px;height:52.60px;background:#fcdcb1;border:1px solid #8a2a0c;"></div>
<div class="t" style="top:377.39px;font-size:12.15px;line-height:20px;color:#7b2408;left:229.10px;">14:00 - 22:00</div>
<div class="t" style="top:398.84px;font-size:12.02px;line-height:20px;color:#7b2408;left:229.10px;">Asset-007</div>
<div class="t" style="top:377.30px;font-size:12.4px;line-height:20px;color:#7b2408;left:331.00px;width:100px;text-align:right;"><svg style="position:relative;display:inline-block;vertical-align:-1px;margin-right:7.500px;width:9px;height:11px" viewBox="0 0 9 11"><path fill="#7b2408" d="M3.200 0 H5.800 V5.600 H8.800 L4.500 10.800 L0.200 5.600 H3.200Z"/></svg>67 %</div>
<div style="left:901.40px;top:374.00px;width:222.80px;height:52.60px;background:#8d7b63;border:1px solid #5e2612;"></div>
<div class="t" style="top:377.39px;font-size:12.15px;line-height:20px;color:#6a2a14;left:915.50px;">14:00 - 22:00</div>
<div class="t" style="top:398.84px;font-size:12.02px;line-height:20px;color:#6a2a14;left:915.50px;">Asset-007</div>
<div class="t" style="top:377.30px;font-size:12.4px;line-height:20px;color:#6a2a14;left:1017.40px;width:100px;text-align:right;"><svg style="position:relative;display:inline-block;vertical-align:-1px;margin-right:7.500px;width:9px;height:11px" viewBox="0 0 9 11"><path fill="#6a2a14" d="M3.200 0 H5.800 V5.600 H8.800 L4.500 10.800 L0.200 5.600 H3.200Z"/></svg>67 %</div>
<div style="left:1587.80px;top:374.00px;width:222.80px;height:52.60px;background:#8d7b63;border:1px solid #5e2612;"></div>
<div class="t" style="top:377.39px;font-size:12.15px;line-height:20px;color:#6a2a14;left:1601.90px;">14:00 - 22:00</div>
<div class="t" style="top:398.84px;font-size:12.02px;line-height:20px;color:#6a2a14;left:1601.90px;">Asset-007</div>
<div class="t" style="top:377.30px;font-size:12.4px;line-height:20px;color:#6a2a14;left:1703.80px;width:100px;text-align:right;"><svg style="position:relative;display:inline-block;vertical-align:-1px;margin-right:7.500px;width:9px;height:11px" viewBox="0 0 9 11"><path fill="#6a2a14" d="M3.200 0 H5.800 V5.600 H8.800 L4.500 10.800 L0.200 5.600 H3.200Z"/></svg>67 %</div>
<div style="left:586.80px;top:432.92px;width:280.00px;height:52.60px;background:#6a7f85;border:1px solid #10303a;"></div>
<div class="t" style="top:436.31px;font-size:12.15px;line-height:20px;color:#1c3943;left:600.90px;">03:00 - 13:00</div>
<div class="t" style="top:457.76px;font-size:12.02px;line-height:20px;color:#1c3943;left:600.90px;">Asset-006</div>
<div class="t" style="top:436.22px;font-size:12.4px;line-height:20px;color:#1c3943;left:760.00px;width:100px;text-align:right;">100 %</div>
<div style="left:1273.20px;top:432.92px;width:280.00px;height:52.60px;background:#6a7f85;border:1px solid #10303a;"></div>
<div class="t" style="top:436.31px;font-size:12.15px;line-height:20px;color:#1c3943;left:1287.30px;">03:00 - 13:00</div>
<div class="t" style="top:457.76px;font-size:12.02px;line-height:20px;color:#1c3943;left:1287.30px;">Asset-006</div>
<div class="t" style="top:436.22px;font-size:12.4px;line-height:20px;color:#1c3943;left:1446.40px;width:100px;text-align:right;">100 %</div>
</div>
<div style="left:1892.00px;top:147.00px;width:20.60px;height:489.00px;background:#f1f1f1;"></div>
<div style="left:1894.30px;top:168.00px;width:16.00px;height:118.00px;background:#c1c1c1;"></div>
<svg style="left:1897.500px;top:156px;width:10px;height:5px" viewBox="0 0 10 5"><path fill="#a3a3a3" d="M0 5 L5 0 L10 5Z"/></svg>
<svg style="left:1897.500px;top:622.500px;width:10px;height:5px" viewBox="0 0 10 5"><path fill="#505050" d="M0 0 L5 5 L10 0Z"/></svg>
<div style="left:96.00px;top:635.00px;width:1796.00px;height:21.80px;background:#f1f1f1;"></div>
<div style="left:1892.00px;top:636.00px;width:20.60px;height:20.80px;background:#dcdcdc;"></div>
<div style="left:156.70px;top:638.20px;width:294.00px;height:16.60px;background:#c1c1c1;"></div>
<svg style="left:104px;top:642px;width:6px;height:10px" viewBox="0 0 6 10"><path fill="#505050" d="M6 0 L0 5 L6 10Z"/></svg>
<svg style="left:1878.500px;top:641.500px;width:6px;height:10px" viewBox="0 0 6 10"><path fill="#505050" d="M0 0 L6 5 L0 10Z"/></svg>
<div style="left:96.00px;top:667.00px;width:1817.00px;height:9.40px;background:#e4e4e4;border-radius:4.700px;"></div>
<svg style="left:985px;top:668px;width:38px;height:7px" viewBox="0 0 38 7"><g fill="#9a9a9a"><path d="M1.500 4.800 L3.800 2.500 L6.100 4.800Z"/><rect x="12.700" y="2.500" width="13.500" height="1.800"/><path d="M31.800 4.800 L34.100 2.500 L36.400 4.800Z"/></g></svg>
<div class="t" style="top:695.97px;font-size:14.8px;line-height:24px;color:#1a1a1a;font-weight:bold;letter-spacing:0.1px;left:101.20px;">Shifts - 1 Selected</div>
<div style="left:913.10px;top:691.30px;width:177.20px;height:31.30px;border:1px solid #a9a9a9;border-radius:3px;background:#fff;"></div>
<svg style="left:929.5px;top:701px;width:8.600px;height:12px" viewBox="0 0 10 12"><g fill="#0a7ac2"><rect x="0.300" y="0.200" width="9.400" height="1.200"/><path d="M0.300 2.600 H9.700 L6.300 6.800 V11.600 L3.700 9.700 V6.800Z"/></g></svg>
<div class="t" style="top:697.98px;font-size:13.05px;line-height:20px;color:#8a8a8a;left:944.60px;">Enter Filter Text …</div>
<svg style="left:1068.4px;top:702.200px;width:10.600px;height:9.800px" viewBox="0 0 11 10"><path stroke="#595959" stroke-width="3" d="M1.300 0.800 L9.700 9.200 M9.700 0.800 L1.300 9.200"/></svg>
<div style="left:1094.30px;top:695.30px;width:23.40px;height:23.40px;border:1px solid #a9a9a9;border-radius:4px;background:#fff;"></div>
<svg style="left:1100.5px;top:701.200px;width:11.600px;height:11.600px" viewBox="-6.500 -6.500 13 13"><g fill="#0a7ac2"><path fill-rule="evenodd" d="M0 -4.900 a4.900 4.900 0 1 0 0.010 0Z M0 -2.700 a2.700 2.700 0 1 1 -0.010 0Z"/><rect x="-1.350" y="-6.500" width="2.700" height="2.600" rx="0.300" transform="rotate(0)"/><rect x="-1.350" y="-6.500" width="2.700" height="2.600" rx="0.300" transform="rotate(45)"/><rect x="-1.350" y="-6.500" width="2.700" height="2.600" rx="0.300" transform="rotate(90)"/><rect x="-1.350" y="-6.500" width="2.700" height="2.600" rx="0.300" transform="rotate(135)"/><rect x="-1.350" y="-6.500" width="2.700" height="2.600" rx="0.300" transform="rotate(180)"/><rect x="-1.350" y="-6.500" width="2.700" height="2.600" rx="0.300" transform="rotate(225)"/><rect x="-1.350" y="-6.500" width="2.700" height="2.600" rx="0.300" transform="rotate(270)"/><rect x="-1.350" y="-6.500" width="2.700" height="2.600" rx="0.300" transform="rotate(315)"/></g></svg>
<div style="left:97.00px;top:726.70px;width:1029.00px;height:1.00px;background:#e4e4e4;"></div>
<div style="left:97.00px;top:734.20px;width:1029.00px;height:24.30px;border:1px dashed #9c9c9c;border-radius:4px;"></div>
<svg style="left:501.5px;top:741px;width:12px;height:11px" viewBox="0 0 12 11"><g fill="none" stroke="#a8a8a8" stroke-width="1"><rect x="0.500" y="0.500" width="7" height="1.600" fill="#a8a8a8"/><rect x="3.500" y="4.500" width="7.500" height="2"/><rect x="3.500" y="8.300" width="7.500" height="2"/></g></svg>
<div class="t" style="top:736.94px;font-size:12.86px;line-height:20px;color:#777;left:521.00px;">Drag column headers here to group</div>
<div class="clip" style="left:97.0px;top:766px;width:1009.3px;height:285px;">
<div style="left:0.00px;top:33.25px;width:1009.30px;height:33.41px;background:#f7f7f7;"></div>
<div style="left:0.00px;top:66.66px;width:1009.30px;height:33.41px;background:#e4f0f9;"></div>
<div style="left:0.00px;top:100.07px;width:1009.30px;height:33.41px;background:#f7f7f7;"></div>
<div style="left:0.00px;top:166.89px;width:1009.30px;height:33.41px;background:#f7f7f7;"></div>
<div style="left:0.00px;top:233.71px;width:1009.30px;height:33.41px;background:#f7f7f7;"></div>
<div style="left:0.00px;top:0.00px;width:1009.30px;height:1.00px;background:#e2e2e2;"></div>
<div style="left:0.00px;top:32.75px;width:1009.30px;height:1.00px;background:#e2e2e2;"></div>
<div style="left:0.00px;top:66.16px;width:1009.30px;height:1.00px;background:#e2e2e2;"></div>
<div style="left:0.00px;top:99.57px;width:1009.30px;height:1.00px;background:#e2e2e2;"></div>
<div style="left:0.00px;top:132.98px;width:1009.30px;height:1.00px;background:#e2e2e2;"></div>
<div style="left:0.00px;top:166.39px;width:1009.30px;height:1.00px;background:#e2e2e2;"></div>
<div style="left:0.00px;top:199.80px;width:1009.30px;height:1.00px;background:#e2e2e2;"></div>
<div style="left:0.00px;top:233.21px;width:1009.30px;height:1.00px;background:#e2e2e2;"></div>
<div style="left:0.00px;top:266.62px;width:1009.30px;height:1.00px;background:#e2e2e2;"></div>
<div style="left:0.00px;top:300.03px;width:1009.30px;height:1.00px;background:#e2e2e2;"></div>
<div style="left:0.00px;top:0.00px;width:1.00px;height:300.00px;background:#e2e2e2;"></div>
<div style="left:22.00px;top:0.00px;width:1.00px;height:300.00px;background:#e2e2e2;"></div>
<div style="left:41.80px;top:0.00px;width:1.00px;height:300.00px;background:#e2e2e2;"></div>
<div style="left:252.50px;top:0.00px;width:1.00px;height:300.00px;background:#e2e2e2;"></div>
<div style="left:463.80px;top:0.00px;width:1.00px;height:300.00px;background:#e2e2e2;"></div>
<div style="left:674.50px;top:0.00px;width:1.00px;height:300.00px;background:#e2e2e2;"></div>
<div style="left:0.00px;top:67.00px;width:1009.30px;height:34.00px;border:1px solid #6fb4e3;border-right:none;"></div>
<div style="left:674.50px;top:67.00px;width:1.00px;height:34.00px;background:#6fb4e3;"></div>
<div class="t" style="top:11.63px;font-size:12.6px;line-height:20px;color:#1a1a1a;font-weight:bold;left:25.00px;">S..</div>
<div class="t" style="top:11.70px;font-size:12.4px;line-height:20px;color:#1a1a1a;font-weight:bold;left:44.80px;">Persons</div>
<div class="t" style="top:11.53px;font-size:12.9px;line-height:20px;color:#1a1a1a;font-weight:bold;left:255.50px;">Planned Start Time</div>
<div class="t" style="top:11.70px;font-size:12.4px;line-height:20px;color:#1a1a1a;font-weight:bold;left:466.80px;">Planned End Time</div>
<div class="t" style="top:11.70px;font-size:12.4px;line-height:20px;color:#1a1a1a;font-weight:bold;left:677.50px;">Work Center Code</div>
<svg style="left:2.799999999999997px;top:42.95px;width:14px;height:14px" viewBox="0 0 14 14"><circle cx="7" cy="7" r="6.250" fill="#fff" stroke="#979797" stroke-width="1.250"/></svg>
<div class="t" style="top:40.90px;font-size:12.85px;line-height:20px;color:#222;left:44.60px;">Boyer, Tiffany</div>
<div class="t" style="top:41.00px;font-size:12.54px;line-height:20px;color:#222;left:255.50px;">08/22/2023 14:00:00</div>
<div class="t" style="top:41.00px;font-size:12.54px;line-height:20px;color:#222;left:466.80px;">08/22/2023 22:00:00</div>
<div class="t" style="top:41.07px;font-size:12.35px;line-height:20px;color:#222;left:677.40px;">Assembly Line 1</div>
<svg style="left:2.799999999999997px;top:76.36px;width:14px;height:14px" viewBox="0 0 14 14"><circle cx="7" cy="7" r="6.900" fill="#0a7ac2"/><circle cx="7" cy="7" r="2.800" fill="#fff"/></svg>
<div class="t" style="top:74.31px;font-size:12.85px;line-height:20px;color:#222;left:44.60px;">Cho, William</div>
<div class="t" style="top:74.41px;font-size:12.54px;line-height:20px;color:#222;left:255.50px;">08/22/2023 14:00:00</div>
<div class="t" style="top:74.41px;font-size:12.54px;line-height:20px;color:#222;left:466.80px;">08/22/2023 22:00:00</div>
<div class="t" style="top:74.32px;font-size:12.8px;line-height:20px;color:#222;left:677.40px;">Milling Machine 1, Milling Machine 2</div>
<svg style="left:2.799999999999997px;top:109.77px;width:14px;height:14px" viewBox="0 0 14 14"><circle cx="7" cy="7" r="6.250" fill="#fff" stroke="#979797" stroke-width="1.250"/></svg>
<div class="t" style="top:107.72px;font-size:12.85px;line-height:20px;color:#222;left:44.60px;">Collins, Rochelle</div>
<div class="t" style="top:107.82px;font-size:12.54px;line-height:20px;color:#222;left:255.50px;">08/22/2023 14:00:00</div>
<div class="t" style="top:107.82px;font-size:12.54px;line-height:20px;color:#222;left:466.80px;">08/22/2023 22:00:00</div>
<div class="t" style="top:107.89px;font-size:12.35px;line-height:20px;color:#222;left:677.40px;">Assembly Line 1</div>
<svg style="left:2.799999999999997px;top:143.18px;width:14px;height:14px" viewBox="0 0 14 14"><circle cx="7" cy="7" r="6.250" fill="#fff" stroke="#979797" stroke-width="1.250"/></svg>
<svg style="left:29.200000000000003px;top:146.08000000000004px;width:10px;height:12px" viewBox="0 0 10 12"><path fill="#7b2408" d="M3.600 0 H6.400 V6.200 H9.600 L5 11.800 L0.400 6.200 H3.600Z"/></svg>
<div class="t" style="top:141.13px;font-size:12.85px;line-height:20px;color:#222;left:44.60px;">Evitt, Diane</div>
<div class="t" style="top:141.23px;font-size:12.54px;line-height:20px;color:#222;left:255.50px;">08/22/2023 14:00:00</div>
<div class="t" style="top:141.23px;font-size:12.54px;line-height:20px;color:#222;left:466.80px;">08/22/2023 22:00:00</div>
<div class="t" style="top:141.14px;font-size:12.8px;line-height:20px;color:#222;left:677.40px;"></div>
<svg style="left:2.799999999999997px;top:176.59px;width:14px;height:14px" viewBox="0 0 14 14"><circle cx="7" cy="7" r="6.250" fill="#fff" stroke="#979797" stroke-width="1.250"/></svg>
<div class="t" style="top:174.54px;font-size:12.85px;line-height:20px;color:#222;left:44.60px;">Hart, Roy</div>
<div class="t" style="top:174.64px;font-size:12.54px;line-height:20px;color:#222;left:255.50px;">08/22/2023 14:00:00</div>
<div class="t" style="top:174.64px;font-size:12.54px;line-height:20px;color:#222;left:466.80px;">08/22/2023 22:00:00</div>
<div class="t" style="top:174.55px;font-size:12.8px;line-height:20px;color:#222;left:677.40px;">Milling Mashine 1</div>
<svg style="left:2.799999999999997px;top:210.00px;width:14px;height:14px" viewBox="0 0 14 14"><circle cx="7" cy="7" r="6.250" fill="#fff" stroke="#979797" stroke-width="1.250"/></svg>
<div class="t" style="top:207.95px;font-size:12.85px;line-height:20px;color:#222;left:44.60px;">Luna, Marie</div>
<div class="t" style="top:208.05px;font-size:12.54px;line-height:20px;color:#222;left:255.50px;">08/22/2023 13:00:00</div>
<div class="t" style="top:208.05px;font-size:12.54px;line-height:20px;color:#222;left:466.80px;">08/22/2023 23:00:00</div>
<div class="t" style="top:207.96px;font-size:12.8px;line-height:20px;color:#222;left:677.40px;">Milling Mashine 2</div>
<svg style="left:2.799999999999997px;top:243.41px;width:14px;height:14px" viewBox="0 0 14 14"><circle cx="7" cy="7" r="6.250" fill="#fff" stroke="#979797" stroke-width="1.250"/></svg>
<div class="t" style="top:241.36px;font-size:12.85px;line-height:20px;color:#222;left:44.60px;">Mcdaniel, Nelson</div>
<div class="t" style="top:241.46px;font-size:12.54px;line-height:20px;color:#222;left:255.50px;">08/22/2023 13:00:00</div>
<div class="t" style="top:241.46px;font-size:12.54px;line-height:20px;color:#222;left:466.80px;">08/22/2023 23:00:00</div>
<div class="t" style="top:241.53px;font-size:12.35px;line-height:20px;color:#222;left:677.40px;">Assembly Line 5</div>
<svg style="left:2.799999999999997px;top:276.82px;width:14px;height:14px" viewBox="0 0 14 14"><circle cx="7" cy="7" r="6.250" fill="#fff" stroke="#979797" stroke-width="1.250"/></svg>
<div class="t" style="top:274.77px;font-size:12.85px;line-height:20px;color:#222;left:44.60px;">Scanlon, Kenneth</div>
<div class="t" style="top:274.87px;font-size:12.54px;line-height:20px;color:#222;left:255.50px;">08/22/2023 14:00:00</div>
<div class="t" style="top:274.87px;font-size:12.54px;line-height:20px;color:#222;left:466.80px;">08/22/2023 22:00:00</div>
<div class="t" style="top:274.94px;font-size:12.35px;line-height:20px;color:#222;left:677.40px;">Assembly Line 4</div>
</div>
<div style="left:97.00px;top:1051.00px;width:1009.30px;height:18.80px;background:#f1f1f1;"></div>
<div style="left:117.50px;top:1052.40px;width:794.50px;height:16.00px;background:#c1c1c1;"></div>
<svg style="left:104.500px;top:1055.500px;width:6px;height:10px" viewBox="0 0 6 10"><path fill="#a3a3a3" d="M6 0 L0 5 L6 10Z"/></svg>
<svg style="left:1092.500px;top:1055.500px;width:6px;height:10px" viewBox="0 0 6 10"><path fill="#505050" d="M0 0 L6 5 L0 10Z"/></svg>
<div style="left:1106.30px;top:766.50px;width:20.20px;height:303.30px;background:#f1f1f1;"></div>
<div style="left:1107.30px;top:786.70px;width:16.70px;height:215.30px;background:#c1c1c1;"></div>
<svg style="left:1111.3px;top:775px;width:10px;height:5px" viewBox="0 0 10 5"><path fill="#a3a3a3" d="M0 5 L5 0 L10 5Z"/></svg>
<svg style="left:1111.3px;top:1057px;width:10px;height:5px" viewBox="0 0 10 5"><path fill="#505050" d="M0 0 L5 5 L10 0Z"/></svg>
<div style="left:1136.80px;top:686.00px;width:9.20px;height:385.50px;background:#e4e4e4;border-radius:4.600px;"></div>
<svg style="left:1138px;top:868px;width:7px;height:40px" viewBox="0 0 7 40"><g fill="#8f8f8f"><path d="M5 3.500 L2.700 5.750 L5 8Z"/><rect x="2.800" y="14.100" width="1.600" height="13"/><path d="M5 32.700 L2.700 35 L5 37.300Z"/></g></svg>
<div class="t" style="top:695.73px;font-size:15.2px;line-height:24px;color:#1a1a1a;letter-spacing:0.12px;left:1161.20px;">Assign Work Centers</div>
<div style="left:1698.90px;top:691.30px;width:177.20px;height:31.30px;border:1px solid #a9a9a9;border-radius:3px;background:#fff;"></div>
<svg style="left:1715.3000000000002px;top:701px;width:8.600px;height:12px" viewBox="0 0 10 12"><g fill="#0a7ac2"><rect x="0.300" y="0.200" width="9.400" height="1.200"/><path d="M0.300 2.600 H9.700 L6.300 6.800 V11.600 L3.700 9.700 V6.800Z"/></g></svg>
<div class="t" style="top:697.98px;font-size:13.05px;line-height:20px;color:#8a8a8a;left:1730.40px;">Enter Filter Text …</div>
<svg style="left:1854.2px;top:702.200px;width:10.600px;height:9.800px" viewBox="0 0 11 10"><path stroke="#595959" stroke-width="3" d="M1.300 0.800 L9.700 9.200 M9.700 0.800 L1.300 9.200"/></svg>
<div style="left:1880.20px;top:695.30px;width:23.40px;height:23.40px;border:1px solid #a9a9a9;border-radius:4px;background:#fff;"></div>
<svg style="left:1886.4px;top:701.200px;width:11.600px;height:11.600px" viewBox="-6.500 -6.500 13 13"><g fill="#0a7ac2"><path fill-rule="evenodd" d="M0 -4.900 a4.900 4.900 0 1 0 0.010 0Z M0 -2.700 a2.700 2.700 0 1 1 -0.010 0Z"/><rect x="-1.350" y="-6.500" width="2.700" height="2.600" rx="0.300" transform="rotate(0)"/><rect x="-1.350" y="-6.500" width="2.700" height="2.600" rx="0.300" transform="rotate(45)"/><rect x="-1.350" y="-6.500" width="2.700" height="2.600" rx="0.300" transform="rotate(90)"/><rect x="-1.350" y="-6.500" width="2.700" height="2.600" rx="0.300" transform="rotate(135)"/><rect x="-1.350" y="-6.500" width="2.700" height="2.600" rx="0.300" transform="rotate(180)"/><rect x="-1.350" y="-6.500" width="2.700" height="2.600" rx="0.300" transform="rotate(225)"/><rect x="-1.350" y="-6.500" width="2.700" height="2.600" rx="0.300" transform="rotate(270)"/><rect x="-1.350" y="-6.500" width="2.700" height="2.600" rx="0.300" transform="rotate(315)"/></g></svg>
<div style="left:1157.00px;top:726.70px;width:755.00px;height:1.00px;background:#e4e4e4;"></div>
<div style="left:1157.30px;top:734.20px;width:754.70px;height:24.30px;border:1px dashed #9c9c9c;border-radius:4px;"></div>
<svg style="left:1424.65px;top:741px;width:12px;height:11px" viewBox="0 0 12 11"><g fill="none" stroke="#a8a8a8" stroke-width="1"><rect x="0.500" y="0.500" width="7" height="1.600" fill="#a8a8a8"/><rect x="3.500" y="4.500" width="7.500" height="2"/><rect x="3.500" y="8.300" width="7.500" height="2"/></g></svg>
<div class="t" style="top:736.94px;font-size:12.86px;line-height:20px;color:#777;left:1444.15px;">Drag column headers here to group</div>
<div class="clip" style="left:1157.3px;top:766px;width:734.5px;height:304px;">
<div style="left:0.00px;top:33.25px;width:734.50px;height:33.41px;background:#f7f7f7;"></div>
<div style="left:0.00px;top:100.07px;width:734.50px;height:33.41px;background:#f7f7f7;"></div>
<div style="left:0.00px;top:166.89px;width:734.50px;height:33.41px;background:#f7f7f7;"></div>
<div style="left:0.00px;top:233.71px;width:734.50px;height:33.41px;background:#f7f7f7;"></div>
<div style="left:0.00px;top:300.53px;width:734.50px;height:33.41px;background:#f7f7f7;"></div>
<div style="left:0.00px;top:0.00px;width:734.50px;height:1.00px;background:#e2e2e2;"></div>
<div style="left:0.00px;top:32.75px;width:734.50px;height:1.00px;background:#e2e2e2;"></div>
<div style="left:0.00px;top:66.16px;width:734.50px;height:1.00px;background:#e2e2e2;"></div>
<div style="left:0.00px;top:99.57px;width:734.50px;height:1.00px;background:#e2e2e2;"></div>
<div style="left:0.00px;top:132.98px;width:734.50px;height:1.00px;background:#e2e2e2;"></div>
<div style="left:0.00px;top:166.39px;width:734.50px;height:1.00px;background:#e2e2e2;"></div>
<div style="left:0.00px;top:199.80px;width:734.50px;height:1.00px;background:#e2e2e2;"></div>
<div style="left:0.00px;top:233.21px;width:734.50px;height:1.00px;background:#e2e2e2;"></div>
<div style="left:0.00px;top:266.62px;width:734.50px;height:1.00px;background:#e2e2e2;"></div>
<div style="left:0.00px;top:300.03px;width:734.50px;height:1.00px;background:#e2e2e2;"></div>
<div style="left:0.00px;top:333.44px;width:734.50px;height:1.00px;background:#e2e2e2;"></div>
<div style="left:0.00px;top:0.00px;width:1.00px;height:310.00px;background:#e2e2e2;"></div>
<div style="left:36.70px;top:0.00px;width:1.00px;height:310.00px;background:#e2e2e2;"></div>
<div style="left:156.50px;top:0.00px;width:1.00px;height:310.00px;background:#e2e2e2;"></div>
<div style="left:613.50px;top:0.00px;width:1.00px;height:310.00px;background:#e2e2e2;"></div>
<div style="left:733.50px;top:0.00px;width:1.00px;height:310.00px;background:#e2e2e2;"></div>
<div style="left:0.00px;top:33.00px;width:734.50px;height:35.00px;border:1px solid #6fb4e3;"></div>
<div class="t" style="top:11.63px;font-size:12.6px;line-height:20px;color:#1a1a1a;font-weight:bold;letter-spacing:0.3px;left:2.70px;">A...</div>
<svg style="left:27.0px;top:19.899999999999977px;width:7px;height:5px" viewBox="0 0 7 5"><path fill="#1a1a1a" d="M0.300 0.500 H6.700 L3.500 4.300Z"/></svg>
<div class="t" style="top:11.70px;font-size:12.4px;line-height:20px;color:#1a1a1a;font-weight:bold;left:39.70px;">Work Center Code</div>
<div class="t" style="top:11.60px;font-size:12.7px;line-height:20px;color:#1a1a1a;font-weight:bold;left:159.70px;">Name</div>
<div class="t" style="top:11.56px;font-size:12.8px;line-height:20px;color:#1a1a1a;font-weight:bold;left:616.70px;">Required Staff</div>
<svg style="left:4.7000000000000455px;top:46.450000000000045px;width:13px;height:11px" viewBox="0 0 13 11"><path fill="none" stroke="#a2c20e" stroke-width="2.800" d="M1 6 L4.400 9.200 L12 1.200"/></svg>
<div class="t" style="top:41.12px;font-size:12.2px;line-height:20px;color:#222;letter-spacing:-0.1px;left:39.70px;">Asset-007</div>
<div class="t" style="top:40.91px;font-size:12.8px;line-height:20px;color:#222;left:159.70px;">Milling Machine 1</div>
<div class="t" style="top:40.95px;font-size:12.7px;line-height:20px;color:#222;letter-spacing:0.8px;left:616.70px;">2/2</div>
<svg style="left:4.7000000000000455px;top:79.86000000000001px;width:13px;height:11px" viewBox="0 0 13 11"><path fill="none" stroke="#a2c20e" stroke-width="2.800" d="M1 6 L4.400 9.200 L12 1.200"/></svg>
<div class="t" style="top:74.53px;font-size:12.2px;line-height:20px;color:#222;letter-spacing:-0.1px;left:39.70px;">Asset-008</div>
<div class="t" style="top:74.32px;font-size:12.8px;line-height:20px;color:#222;left:159.70px;">Milling Machine 2</div>
<div class="t" style="top:74.36px;font-size:12.7px;line-height:20px;color:#222;letter-spacing:0.8px;left:616.70px;">1/3</div>
<div class="t" style="top:107.94px;font-size:12.2px;line-height:20px;color:#222;letter-spacing:-0.1px;left:39.70px;">Asset-000</div>
<div class="t" style="top:107.73px;font-size:12.8px;line-height:20px;color:#222;left:159.70px;">Milling Machine 3</div>
<div class="t" style="top:107.77px;font-size:12.7px;line-height:20px;color:#222;letter-spacing:0.8px;left:616.70px;">1/3</div>
<div class="t" style="top:141.35px;font-size:12.2px;line-height:20px;color:#222;letter-spacing:-0.1px;left:39.70px;">Asset-001</div>
<div class="t" style="top:141.28px;font-size:12.4px;line-height:20px;color:#222;left:159.70px;">Assembly Line 1</div>
<div class="t" style="top:141.18px;font-size:12.7px;line-height:20px;color:#222;letter-spacing:0.8px;left:616.70px;">1/1</div>
<div class="t" style="top:174.76px;font-size:12.2px;line-height:20px;color:#222;letter-spacing:-0.1px;left:39.70px;">Asset-002</div>
<div class="t" style="top:174.69px;font-size:12.4px;line-height:20px;color:#222;left:159.70px;">Assembly Line 2</div>
<div class="t" style="top:174.59px;font-size:12.7px;line-height:20px;color:#222;letter-spacing:0.8px;left:616.70px;">0/1</div>
<div class="t" style="top:208.17px;font-size:12.2px;line-height:20px;color:#222;letter-spacing:-0.1px;left:39.70px;">Asset-003</div>
<div class="t" style="top:208.10px;font-size:12.4px;line-height:20px;color:#222;left:159.70px;">Assembly Line 3</div>
<div class="t" style="top:208.00px;font-size:12.7px;line-height:20px;color:#222;letter-spacing:0.8px;left:616.70px;">0/2</div>
<div class="t" style="top:241.58px;font-size:12.2px;line-height:20px;color:#222;letter-spacing:-0.1px;left:39.70px;">Asset-004</div>
<div class="t" style="top:241.51px;font-size:12.4px;line-height:20px;color:#222;left:159.70px;">Assembly Line 4</div>
<div class="t" style="top:241.41px;font-size:12.7px;line-height:20px;color:#222;letter-spacing:0.8px;left:616.70px;">1/1</div>
<div class="t" style="top:274.99px;font-size:12.2px;line-height:20px;color:#222;letter-spacing:-0.1px;left:39.70px;">Asset-005</div>
<div class="t" style="top:274.92px;font-size:12.4px;line-height:20px;color:#222;left:159.70px;">Assembly Line 5</div>
<div class="t" style="top:274.82px;font-size:12.7px;line-height:20px;color:#222;letter-spacing:0.8px;left:616.70px;">2/2</div>
<div class="t" style="top:308.40px;font-size:12.2px;line-height:20px;color:#222;letter-spacing:-0.1px;left:39.70px;"></div>
<div class="t" style="top:308.19px;font-size:12.8px;line-height:20px;color:#222;left:159.70px;"></div>
<div class="t" style="top:308.23px;font-size:12.7px;line-height:20px;color:#222;letter-spacing:0.8px;left:616.70px;"></div>
</div>
<div style="left:1891.80px;top:766.50px;width:20.20px;height:303.80px;background:#f1f1f1;"></div>
<div style="left:1892.80px;top:786.50px;width:16.70px;height:263.20px;background:#c1c1c1;"></div>
<svg style="left:1896.8px;top:775px;width:10px;height:5px" viewBox="0 0 10 5"><path fill="#a3a3a3" d="M0 5 L5 0 L10 5Z"/></svg>
<svg style="left:1896.8px;top:1057px;width:10px;height:5px" viewBox="0 0 10 5"><path fill="#505050" d="M0 0 L5 5 L10 0Z"/></svg>
</body></html>
